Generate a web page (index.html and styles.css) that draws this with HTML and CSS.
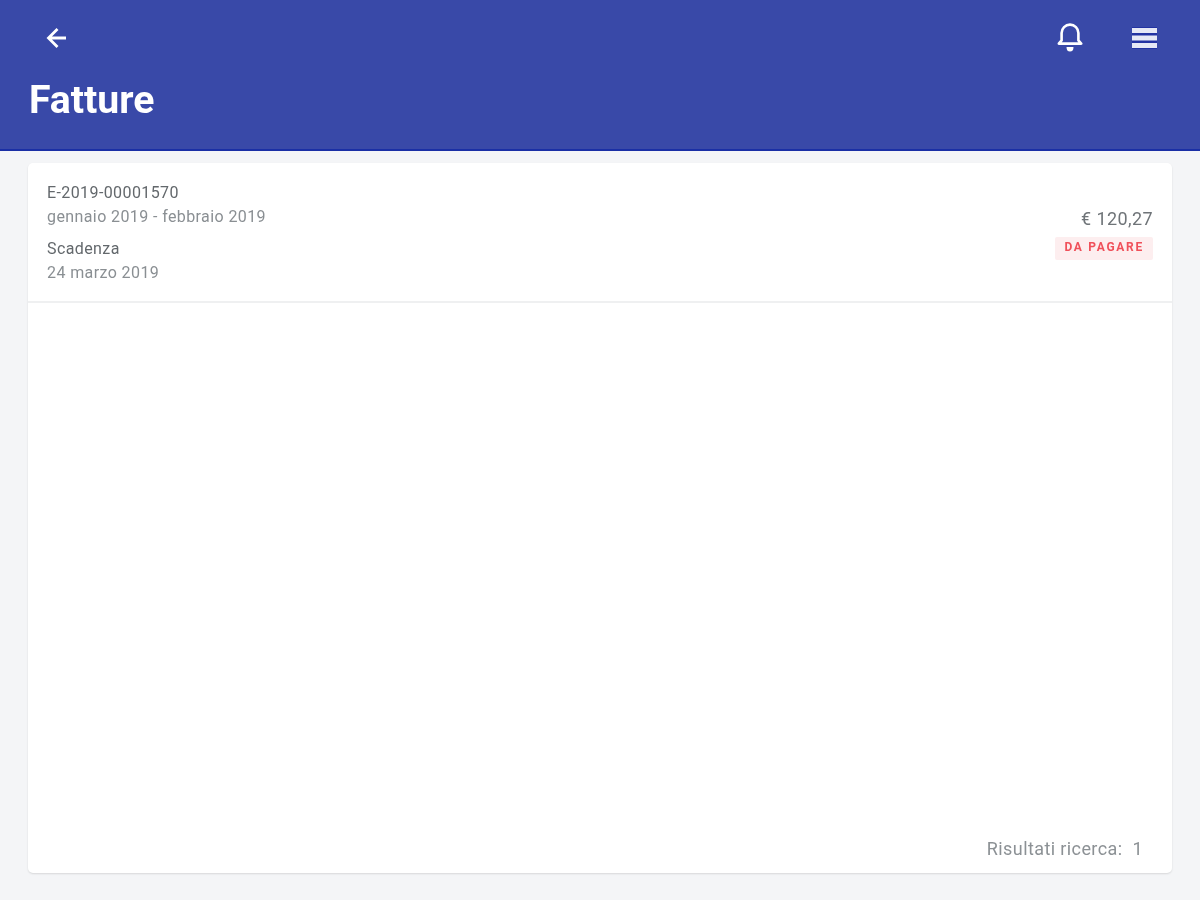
FILE: index.html
```
<!DOCTYPE html>
<html lang="it">
<head>
<meta charset="utf-8">
<title>Fatture</title>
<link rel="stylesheet" href="styles.css">
</head>
<body>
<div class="app">
  <header class="topbar">
    <div class="toolbar">
      <svg class="icon back" viewBox="0 0 24 30"><path d="M21 15H4M12.5 6L3.5 15l9 9" fill="none" stroke="#fff" stroke-width="2.8"/></svg>
      <div class="actions">
        <svg class="icon bell" viewBox="0 0 26 30"><path d="M1.8 20.6L4.6 17.4V10a8.4 8.4 0 0 1 16.8 0V17.4L24.2 20.6Z" fill="none" stroke="#fff" stroke-width="2.6" stroke-linejoin="round"/><path d="M9.5 24h7a3.5 4.5 0 0 1-7 0z" fill="#fff"/></svg>
        <svg class="icon menu" viewBox="0 0 25 30"><path d="M0 4h25v22H0z" fill="#2333a2"/><path d="M0 5h25v5H0zM0 12.5h25v5H0zM0 20h25v5H0z" fill="#e6e8f5"/></svg>
      </div>
    </div>
    <h1 class="title">Fatture</h1>
  </header>
  <main class="card">
    <section class="row">
      <div class="info">
        <div class="line dark">E-2019-00001570</div>
        <div class="line">gennaio 2019 - febbraio 2019</div>
        <div class="line dark due">Scadenza</div>
        <div class="line">24 marzo 2019</div>
      </div>
      <div class="amount">
        <div class="price">€ 120,27</div>
        <div class="badge">DA PAGARE</div>
      </div>
    </section>
    <div class="spacer"></div>
    <footer class="results"><span>Risultati ricerca:</span><span>1</span></footer>
  </main>
</div>
</body>
</html>
```

FILE: styles.css
```
* { box-sizing: border-box; }
html, body { margin: 0; height: 100%; }
body { background: #f4f5f7; font-family: Roboto, "Liberation Sans", sans-serif; color: #6b7075; }
.app { height: 900px; display: flex; flex-direction: column; filter: blur(0.4px); }
.topbar { height: 151px; background: #3949a8; border-bottom: 2px solid #1a2fa5; padding: 23px 43px 0 29px; color: #fff; flex: none; }
.toolbar { display: flex; justify-content: space-between; align-items: center; height: 30px; padding-left: 16px; }
.actions { display: flex; gap: 49px; align-items: center; }
.icon { height: 30px; display: block; }
.back { width: 24px; }
.bell { width: 26px; }
.menu { width: 25px; }
.title { margin: 25px 0 0; font-size: 39.2px; line-height: 44px; font-weight: 700; letter-spacing: 0; }
.card { flex: none; height: 710px; margin: 12px 28px 0; background: #fff; border-radius: 5px; box-shadow: 0 1px 2px rgba(0,0,0,.12); display: flex; flex-direction: column; }
.row { height: 140px; border-bottom: 2px solid #eff0f1; padding: 18px 19px 0; display: flex; justify-content: space-between; }
.line { font-size: 16px; line-height: 24px; letter-spacing: 0.4px; color: #8a8f93; }
.line.dark { color: #63686c; }
.line.due { margin-top: 8px; }
.amount { display: flex; flex-direction: column; align-items: flex-end; padding-top: 26px; }
.price { font-size: 18px; line-height: 24px; letter-spacing: 0.4px; color: #6f7478; }
.badge { margin-top: 6px; height: 23px; padding: 0 9px; background: #fdeeef; color: #f0505a; font-size: 12px; line-height: 21px; font-weight: 700; letter-spacing: 1.72px; border-radius: 2px; }
.spacer { flex: 1; }
.results { display: flex; justify-content: flex-end; gap: 10px; padding: 0 29px 12px 0; font-size: 18px; line-height: 24px; letter-spacing: 0.4px; color: #8c9195; }
```
